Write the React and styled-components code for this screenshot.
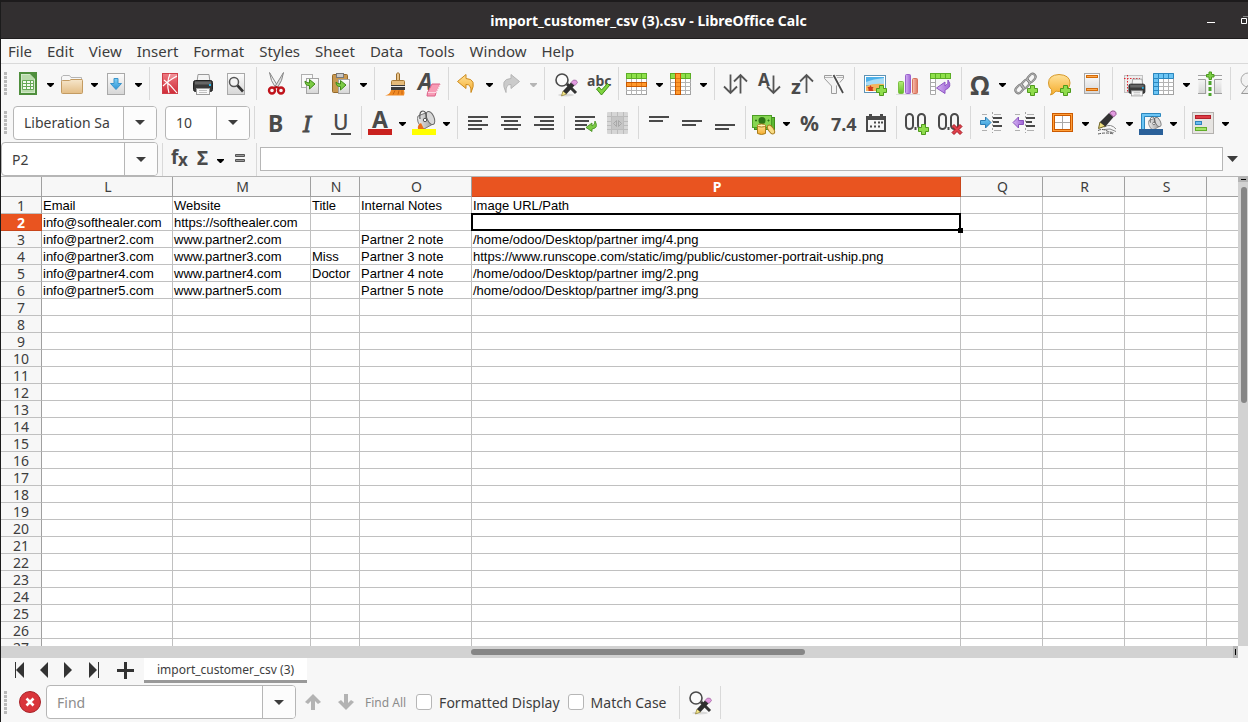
import React from 'react';
import styled, { createGlobalStyle, css } from 'styled-components';

const colors = {
    bar: '#f7f7f7',
    line: '#d9d9d9',
    border: '#b6b6b6',
    grid: '#c0c0c0',
    text: '#3d3d3d',
    ink: '#4a4a4a',
    orange: '#e95420',
    track: '#d2d2d2',
    thumb: '#868686'
};

/* ---------- icons ---------- */

const Icon = ({ children }) => (
    <svg width='24' height='24' viewBox='0 0 24 24' overflow='visible' aria-hidden='true'>{children}</svg>
);

const Gradients = () => (
    <GradientDefs width='0' height='0' aria-hidden='true'>
        <defs>
            <linearGradient id='paper' x1='0' y1='0' x2='0' y2='1'><stop offset='0' stopColor='#fdfdfd' /><stop offset='1' stopColor='#d6d6d6' /></linearGradient>
            <linearGradient id='steel' x1='0' y1='0' x2='1' y2='0'><stop offset='0' stopColor='#ededed' /><stop offset='1' stopColor='#9a9a9a' /></linearGradient>
            <linearGradient id='sand' x1='0' y1='0' x2='0' y2='1'><stop offset='0' stopColor='#f6e6cb' /><stop offset='1' stopColor='#e3bd85' /></linearGradient>
            <linearGradient id='red' x1='0' y1='0' x2='0' y2='1'><stop offset='0' stopColor='#ee7a82' /><stop offset='1' stopColor='#cf2c38' /></linearGradient>
            <linearGradient id='gold' x1='0' y1='0' x2='0' y2='1'><stop offset='0' stopColor='#ffe29a' /><stop offset='1' stopColor='#f5ab2a' /></linearGradient>
            <linearGradient id='green' x1='0' y1='0' x2='0' y2='1'><stop offset='0' stopColor='#b5ee78' /><stop offset='1' stopColor='#63bb28' /></linearGradient>
            <linearGradient id='violet' x1='0' y1='0' x2='1' y2='0'><stop offset='0' stopColor='#d3b2f2' /><stop offset='1' stopColor='#a064d6' /></linearGradient>
            <linearGradient id='blue' x1='0' y1='0' x2='0' y2='1'><stop offset='0' stopColor='#7fd0f5' /><stop offset='1' stopColor='#2e94d6' /></linearGradient>
            <linearGradient id='salmon' x1='0' y1='0' x2='1' y2='0'><stop offset='0' stopColor='#f9c4b4' /><stop offset='1' stopColor='#dd7660' /></linearGradient>
        </defs>
    </GradientDefs>
);

const Sheet = () => <rect x='3.5' y='1.5' width='17' height='21' fill='url(#paper)' stroke='#a9a9a9' />;
const Plus = ({ x, y }) => (
    <path transform={`translate(${x} ${y})`} d='M3.5.5h4v3h3v4h-3v3h-4v-3h-3v-4h3z' fill='#8fdc4c' stroke='#4f9a1c' />
);
const Lens = () => (
    <>
        <ellipse cx='13' cy='23' rx='8' ry='1.5' fill='#000' opacity='.12' />
        <path d='M14 12l9 9' stroke='#333' strokeWidth='3' />
        <circle cx='9' cy='8' r='6' fill='#fbfbfb' stroke='#4a4a4a' strokeWidth='1.6' />
        <path d='M8.5 24l1.500-5 3.500 3z' fill='#f6e98a' stroke='#8a7a30' strokeWidth='.7' />
        <path d='M10 19l8-8.500 3.500 3-8 8.500z' fill='#2e2e2e' />
        <path d='M18 10.500l2.500-2.500q3.500-.500 4 2.500L22 13.500z' fill='#e29be0' stroke='#9a5a98' strokeWidth='.7' />
    </>
);
const PrinterShape = () => (
    <>
        <path d='M7 10l1-7.500h11l1 7.500z' fill='#f4f4f4' stroke='#9a9a9a' />
        <rect x='3.5' y='8.5' width='19' height='11' rx='2' fill='#3a3a3a' stroke='#222' />
        <rect x='5' y='9.5' width='16' height='3' fill='#666' />
        <rect x='19' y='12' width='2' height='2' fill='#22b8f0' />
        <rect x='6.5' y='16.5' width='13' height='6' fill='#fafafa' stroke='#9a9a9a' />
        <path d='M9 18.500h8M9 20.500h8' stroke='#c2c2c2' />
    </>
);
const TableShape = ({ side }) => (
    <>
        <rect x='1.5' y='1.5' width='20' height='21' fill='#fff' stroke='#a2a2a2' />
        <path d='M1 6.500h21M1 10.500h21M1 14.500h21M1 18.500h21M6.500 1v22M11.500 1v22M16.500 1v22' stroke='#b4b4b4' />
        <rect x='1.5' y='1.5' width='20' height='5' fill='#8ee04a' stroke='#5cae26' />
        <path d='M6.500 2v4M11.500 2v4M16.500 2v4' stroke='#5cae26' />
        {side === 'row' && <><rect x='1.5' y='10.5' width='20' height='4' fill='#ff9a2e' stroke='#cc5a00' /><path d='M6.500 11v3M11.500 11v3M16.500 11v3' stroke='#e37817' /></>}
        {side === 'col' && <><rect x='6.5' y='1.5' width='5' height='21' fill='#ff9a2e' stroke='#cc5a00' /><path d='M7 6.500h4M7 10.500h4M7 14.500h4M7 18.500h4' stroke='#e37817' /></>}
    </>
);
const Bucket = () => (
    <>
        <path d='M4 5l10-4 5 12-9 5q-4-1-6-7-1-4 0-6z' fill='url(#steel)' stroke='#777' />
        <ellipse cx='16.5' cy='7' rx='3.5' ry='7' transform='rotate(-24 16.5 7)' fill='#d8d8d8' stroke='#6a6a6a' />
        <path d='M6 8q-1-8 3-8t3 9' fill='none' stroke='#555' strokeWidth='1.2' />
        <circle cx='11' cy='9' r='1.7' fill='#fff' stroke='#555' />
    </>
);
const Glyph = ({ x, y, size, children, ...rest }) => (
    <text x={x} y={y} fontSize={size} fontFamily='"Noto Sans", sans-serif' fontWeight='700' fill={colors.ink} {...rest}>{children}</text>
);
const Strokes = ({ rows }) => rows.map(([x, y, w]) => <rect key={`${x}-${y}`} x={x} y={y} width={w} height='2' fill={colors.ink} />);
const Decimals = () => (
    <g fill='none' stroke={colors.ink} strokeWidth='2'>
        <rect x='2' y='3' width='7' height='15' rx='3.5' />
        <rect x='14' y='3' width='7' height='15' rx='3.5' />
        <path d='M10.500 17.500h2' strokeWidth='3' />
    </g>
);
const DashedLines = () => (
    <>
        <path d='M4 3.500h5M4 19.500h5M16 3.500h7M16 19.500h7' stroke='#b0b0b0' />
        <path d='M14.500 1v21' stroke='#a5a5a5' strokeDasharray='2 2' />
    </>
);

const icons = {
    newSheet: (
        <>
            <rect x='4' y='1' width='16' height='21' fill='#e9f4e4' stroke='#4f8f3d' strokeWidth='2' />
            <path d='M5.500 2.500h9l4 4v14h-13z' fill='#b9dbab' />
            <path d='M14 2h5v5z' fill='#4f8f3d' />
            <path d='M6.500 8.500h11v9h-11zM6.500 11.500h11M6.500 14.500h11M10.500 8.500v9M14.500 8.500v9' fill='#f4faf1' stroke='#67a957' />
        </>
    ),
    folder: (
        <>
            <path d='M1.500 19V5l1.500-1.500h6.500L11 5.500h10.500V19z' fill='#f7f7f7' stroke='#b5b5b5' />
            <path d='M1.500 9.500q0-1 1-1h7l1.500-1h11q.500 0 .500 1v12q0 1-1 1h-19q-1 0-1-1z' fill='url(#sand)' stroke='#c39b62' />
        </>
    ),
    save: <><Sheet /><path d='M10 6.500h4v5h3.500L12 17.500 6.500 11.500H10z' fill='url(#blue)' stroke='#3b94cb' /></>,
    pdf: (
        <>
            <rect x='5.5' y='1.5' width='15' height='20' fill='url(#red)' stroke='#cf3f49' />
            <path d='M12 2h8v4q-6 1-7 2z' fill='#fff' opacity='.2' />
            <path d='M6 14q5-5 14-10M7 8q7 5 13 13M13 2q-4 9-1 19' fill='none' stroke='#fff' strokeWidth='1.2' />
        </>
    ),
    print: <PrinterShape />,
    preview: (
        <g transform='translate(1 0)'>
            <Sheet />
            <circle cx='10' cy='10' r='4.5' fill='#f4f4f4' stroke='#555' strokeWidth='1.5' />
            <path d='M13.500 13.500l5.500 6' stroke='#333' strokeWidth='2.6' />
        </g>
    ),
    cut: (
        <>
            <path d='M5.500.500l8.500 14-2.500 1Q6.500 9 5.500.500z' fill='#efefef' stroke='#888' />
            <path d='M19.500.500L11 14.500l2.500 1Q18.500 9 19.500.500z' fill='#dcdcdc' stroke='#888' />
            <ellipse cx='8' cy='18.5' rx='3' ry='3' fill='none' stroke='#c0141c' strokeWidth='2.4' />
            <ellipse cx='17' cy='18.5' rx='3' ry='3' fill='none' stroke='#c0141c' strokeWidth='2.4' />
            <path d='M10 16l2.500-1 2.500 1' fill='none' stroke='#b80d14' strokeWidth='2' />
        </>
    ),
    copy: (
        <>
            <rect x='4.5' y='2.5' width='11' height='13' fill='#fafafa' stroke='#b0b0b0' />
            <rect x='9.5' y='6.5' width='12' height='15' fill='url(#paper)' stroke='#a3a3a3' />
            <path d='M8 9q0 5 4.500 4.500V17l5.500-5-5.500-4.500V11Q9.500 11 8 9z' fill='#7ccb45' stroke='#3f8a18' />
        </>
    ),
    paste: (
        <>
            <rect x='3.5' y='2.5' width='15' height='18' rx='1' fill='#c99850' stroke='#94692b' />
            <rect x='7.5' y='1.5' width='7' height='4' fill='#c9c9c9' stroke='#777' />
            <rect x='9.5' y='7.5' width='11' height='14' fill='url(#paper)' stroke='#a3a3a3' />
            <path d='M7 10q0 5 4.500 4.500V18l5.500-5-5.500-4.500V12Q8.500 12 7 10z' fill='#7ccb45' stroke='#3f8a18' />
        </>
    ),
    brush: (
        <>
            <path d='M14.500 10V2q1.500-3 3 0v8' fill='#e9c48b' stroke='#9b6d2c' />
            <rect x='9.5' y='8.5' width='13' height='5' rx='1' fill='#e5bb7a' stroke='#a77936' />
            <rect x='9' y='13' width='14' height='5' fill='#3c3c3c' />
            <path d='M9 14.500h14' stroke='#eee' />
            <path d='M9 18h13q1 3 0 5.500H3q5-1 6-5.500z' fill='#f08a24' />
            <path d='M13 18.500l-2 4M17 18.500l-1 4M20 18.500v4' stroke='#c76410' />
        </>
    ),
    clear: (
        <>
            <Glyph x='3' y='18' size='23' fontStyle='italic'>A</Glyph>
            <path d='M12.500 20.500l4.500-8.500h8l-4 8.500-1 3.500h-8z' fill='#f79bb5' stroke='#dc5f86' />
            <path d='M13 20.500h8l4-8' fill='none' stroke='#fcd5e0' />
        </>
    ),
    undo: <path d='M11 2.500L2.500 9.500l8.500 7v-4q5.500-.500 5 8 6.500-13.500-5-14z' fill='url(#gold)' stroke='#cd8b1e' strokeLinejoin='round' />,
    redo: <path d='M12 2.500l8.500 7-8.500 7v-4q-5.500-.500-5 8-6.500-13.500 5-14z' fill='#cbcbcb' stroke='#b5b5b5' strokeLinejoin='round' />,
    find: <g transform='translate(1 0)'><Lens /></g>,
    spell: (
        <>
            <Glyph x='2' y='14' size='14'>abc</Glyph>
            <path d='M11.500 17l2.500-2 2.500 3 6-6.500 2 2L16.500 23z' fill='#7fd33f' stroke='#3f8f15' />
        </>
    ),
    row: <TableShape side='row' />,
    col: <TableShape side='col' />,
    sort: <path d='M8.500 2.500v18M2 14.500l6.500 6.500 6.500-6.500M18.500 21.500V3.500M12 9.500L18.500 3l6.500 6.500' fill='none' stroke='#555' strokeWidth='1.8' />,
    sortAsc: <><Glyph x='3' y='14' size='17'>A</Glyph><path d='M18.500 3.500v17M12 14.500l6.500 6.500 6.500-6.500' fill='none' stroke='#555' strokeWidth='1.8' /></>,
    sortDesc: <><Glyph x='3' y='22' size='20'>z</Glyph><path d='M18.500 21v-17M12 9.500L18.500 3l6.500 6.500' fill='none' stroke='#555' strokeWidth='1.8' /></>,
    filter: (
        <>
            <path d='M3.500 3.500h19v3l-7 7.500v7.500h-5V14l-7-7.500z' fill='#f3f3f3' stroke='#9c9c9c' />
            <path d='M4 5.500h18' stroke='#b8b8b8' />
            <path d='M12 2l10 18.500' stroke='#fff' strokeWidth='3.5' />
            <path d='M12.500 3l9.500 18' stroke='#4a4a4a' strokeWidth='1.8' />
        </>
    ),
    image: (
        <>
            <rect x='2.5' y='3.5' width='21' height='17' fill='#fff' stroke='#5e93b5' />
            <rect x='4' y='5' width='18' height='14' fill='#4db1ea' />
            <path d='M4 10q7-3 18-4v7H4z' fill='#a8dcf6' />
            <path d='M4 14q8-3 18-2v7H4z' fill='#f4b55d' />
            <path d='M8.500 13l1 2h2l-1 2 1 2h-5l0-2-1-2h2z' fill='#cf3b1d' />
            <Plus x='14' y='13' />
        </>
    ),
    chart: (
        <>
            <path d='M1 22.500h24' stroke='#ddd' />
            <rect x='3.5' y='9.5' width='5' height='12' rx='1' fill='url(#green)' stroke='#7cc043' />
            <rect x='10.5' y='2.5' width='5' height='19' rx='1' fill='url(#violet)' stroke='#9a62cd' />
            <rect x='17.5' y='6.5' width='5' height='15' rx='1' fill='url(#salmon)' stroke='#d5735d' />
        </>
    ),
    pivot: (
        <>
            <path d='M2.500 1.500v21h5v-21M2 10.500h6M2 14.500h6M2 18.500h6' fill='#fff' stroke='#a9a9a9' />
            <rect x='2.5' y='1.5' width='20' height='5' fill='#8ee04a' stroke='#5cae26' />
            <path d='M7.500 2v4M12.500 2v4M17.500 2v4' stroke='#5cae26' />
            <path d='M20 8q5 7-3 10v3.500L8.500 16l8.500-6v4q4-2 3-6z' fill='url(#violet)' stroke='#8e55c4' />
        </>
    ),
    omega: <Glyph x='2' y='23' size='26'>Ω</Glyph>,
    link: (
        <>
            <g fill='none' stroke='#777' strokeWidth='2.2'>
                <rect x='2' y='14' width='9' height='6' rx='3' transform='rotate(-48 6.5 17)' />
                <rect x='8' y='9' width='9' height='6' rx='3' transform='rotate(-48 12.5 12)' />
                <rect x='14' y='3' width='9' height='6' rx='3' transform='rotate(-48 18.5 6)' />
            </g>
            <g fill='none' stroke='#c4c4c4' strokeWidth='.8'>
                <rect x='2' y='14' width='9' height='6' rx='3' transform='rotate(-48 6.5 17)' />
                <rect x='8' y='9' width='9' height='6' rx='3' transform='rotate(-48 12.5 12)' />
                <rect x='14' y='3' width='9' height='6' rx='3' transform='rotate(-48 18.5 6)' />
            </g>
            <Plus x='14' y='13' />
        </>
    ),
    comment: (
        <>
            <path d='M13 2.500q11 .500 11 8.500t-11 8.500q-2 0-3-.500-2 3-5.500 4 2-3 1-5.500-3-2-3-6.500 0-8 10.500-8.500z' fill='url(#gold)' stroke='#d79a2b' />
            <Plus x='14' y='13' />
        </>
    ),
    headers: (
        <>
            <rect x='5.5' y='1.5' width='15' height='20' fill='url(#paper)' stroke='#a9a9a9' />
            <rect x='7.5' y='3.5' width='11' height='2' fill='#ffa94d' stroke='#d36b09' />
            <rect x='7.5' y='16.5' width='11' height='2' fill='#ffa94d' stroke='#d36b09' />
        </>
    ),
    printArea: (
        <>
            <rect x='4.5' y='3.5' width='18' height='17' fill='#ededed' stroke='#c2c2c2' />
            <path d='M4 6.500h16M7.500 3v18' fill='none' stroke='#e2242d' strokeDasharray='1.5 1.5' />
            <g transform='translate(6 5) scale(.84)'><PrinterShape /></g>
        </>
    ),
    freeze: (
        <>
            <rect x='1.5' y='1.5' width='20' height='21' fill='#fff' stroke='#a2a2a2' />
            <path d='M6.500 6.500h15M6.500 10.500h15M6.500 14.500h15M6.500 18.500h15M11.500 6v16M16.500 6v16' stroke='#b4b4b4' />
            <path d='M1.500 1.500h20v5h-15v16h-5z' fill='#6cc5f4' stroke='#2b87bf' />
            <path d='M6.500 2v4M11.500 2v4M16.500 2v4M2 6.500h4M2 10.500h4M2 14.500h4M2 18.500h4' stroke='#2b87bf' />
        </>
    ),
    splitWindow: (
        <>
            <rect x='1.5' y='3.5' width='8' height='18' fill='url(#paper)' />
            <rect x='17.5' y='3.5' width='7' height='18' fill='url(#paper)' />
            <path d='M1 3.500h8M17 3.500h8M1 7.500h7.500V22M25 7.500h-7.500V22M1 21.500h8M17 21.500h8' fill='none' stroke='#a0a0a0' />
            <path d='M13 9v15' stroke='#4ba32b' strokeWidth='3' strokeDasharray='4 2' />
            <path d='M12 0h2.500v2.500H17V5h-2.500v2.500H12V5H9.500V2.500H12z' fill='#7ccf46' stroke='#4c9a20' />
        </>
    ),
    shapes: (
        <>
            <circle cx='10' cy='8' r='7' fill='#f2f2f2' stroke='#aaa' />
            <path d='M3.500 21.500l8-10 8 10z' fill='#e8e8e8' stroke='#999' />
        </>
    ),
    bold: <Glyph x='6' y='21' size='23'>B</Glyph>,
    italic: <Glyph x='8' y='21' size='22' fontFamily='"DejaVu Serif", serif' fontStyle='italic' fontWeight='400' stroke={colors.ink} strokeWidth='.8'>I</Glyph>,
    underline: <><Glyph x='5' y='19' size='21' fontWeight='500'>U</Glyph><rect x='3' y='22' width='20' height='2' fill={colors.ink} /></>,
    fontColor: <><Glyph x='4' y='17' size='23'>A</Glyph><rect x='0' y='18' width='24' height='6' fill='#c9211e' /></>,
    highlight: (
        <>
            <g transform='translate(2 0)'><Bucket /></g>
            <path d='M6 18q-1-4 3-6l3 6z' fill='#e9711c' />
            <rect x='0' y='18' width='24' height='6' fill='#ff0' />
        </>
    ),
    left: <Strokes rows={[[3, 5, 20], [3, 9, 14], [3, 13, 20], [3, 17, 14]]} />,
    center: <Strokes rows={[[3, 5, 20], [6, 9, 14], [3, 13, 20], [6, 17, 14]]} />,
    right: <Strokes rows={[[3, 5, 20], [9, 9, 14], [3, 13, 20], [9, 17, 14]]} />,
    wrap: (
        <>
            <Strokes rows={[[3, 5, 20], [3, 9, 14], [3, 13, 12], [3, 17, 10]]} />
            <path d='M23 10q4 7-3 8v2.500l-6-4 6-4.500V15q3-1 3-5z' fill='#7ccb45' stroke='#3f8a18' strokeWidth='.8' />
        </>
    ),
    merge: (
        <>
            <rect x='2' y='1' width='21' height='22' rx='1' fill='#d6d6d6' />
            <path d='M2 5.500h21M2 18.500h21M6.500 1v22M12.500 1v5M12.500 18v5M18.500 1v22M2 10.500h5M2 14.500h5M18 10.500h5M18 14.500h5' stroke='#bcbcbc' />
            <rect x='7' y='6' width='11' height='12' fill='#c6c6c6' />
            <path d='M11.500 9.500v6l-3-3zM13.500 9.500v6l3-3z' fill='none' stroke='#a8a8a8' />
        </>
    ),
    top: <Strokes rows={[[3, 5, 20], [3, 9, 14]]} />,
    middle: <Strokes rows={[[3, 9, 20], [3, 13, 14]]} />,
    bottom: <Strokes rows={[[3, 13, 20], [3, 17, 14]]} />,
    currency: (
        <>
            <rect x='2.5' y='6.5' width='20' height='12' fill='#5fb832' stroke='#3f8e1b' />
            <rect x='.5' y='4.5' width='19' height='12' fill='#86d552' stroke='#4c9e25' />
            <circle cx='10' cy='9.5' r='3.5' fill='#2f7417' />
            <path d='M3.500 9h1v1h-1zM16 9h1v1h-1z' fill='#2f7417' stroke='#2f7417' />
            <path d='M5.500 14.500v8q4 2 8 0v-8z' fill='url(#gold)' stroke='#a87d1d' />
            <ellipse cx='9.5' cy='14.5' rx='4' ry='1.5' fill='#fff0b8' stroke='#a87d1d' />
            <ellipse cx='19' cy='18.5' rx='2.5' ry='5' transform='rotate(-35 19 18.5)' fill='#f8dc85' stroke='#a87d1d' />
        </>
    ),
    percent: <Glyph x='3' y='20' size='21'>%</Glyph>,
    number: <Glyph x='1' y='20' size='18'>7.4</Glyph>,
    date: (
        <>
            <path d='M3 5h3V3h3v2h8V3h3v2h3v16H3z' fill={colors.ink} />
            <rect x='5' y='9' width='16' height='10' fill='#f7f7f7' />
            <path d='M11 11.500h2M15 11.500h2M18 11.500h2M7 15.500h2M11 15.500h2M15 15.500h2' stroke={colors.ink} strokeWidth='2' />
        </>
    ),
    addDecimal: <><Decimals /><Plus x='14' y='13' /></>,
    dropDecimal: (
        <>
            <Decimals />
            <path d='M15 15.500l2-2 3 3 3-3 2 2-3 3 3 3-2 2-3-3-3 3-2-2 3-3z' fill='#e0404a' stroke='#a5151f' />
        </>
    ),
    indent: (
        <>
            <DashedLines />
            <Strokes rows={[[15, 6, 9], [15, 10, 6], [15, 14, 9]]} />
            <path d='M2.500 9.500h5v-3.500l5.500 5.500-5.500 5.500v-3.500h-5z' fill='url(#blue)' stroke='#2d7db3' />
        </>
    ),
    outdent: (
        <>
            <DashedLines />
            <Strokes rows={[[15, 6, 9], [15, 10, 6], [15, 14, 9]]} />
            <path d='M12.500 9.500h-5v-3.500L2 11.500 7.500 17v-3.500h5z' fill='url(#violet)' stroke='#8a55bd' />
        </>
    ),
    borders: (
        <>
            <rect x='2.5' y='3.5' width='18' height='16' fill='#fff' stroke='#cc5a00' strokeWidth='3' />
            <rect x='2.5' y='3.5' width='18' height='16' fill='none' stroke='#ff9f3a' />
            <path d='M11.500 5v13M4 11.500h15' stroke='#a8a8a8' />
        </>
    ),
    lineStyle: (
        <>
            <path d='M9 16q7-4 12 2M9 18.500q6-2 12 2' fill='none' stroke='#888' />
            <path d='M3 19.500q4-2 8 0t8 2M3 23q4-1 8-1t8 1' fill='none' stroke='#555' strokeDasharray='3 1' />
            <path d='M3.500 17.500L5 11l5.500 4z' fill='#efe083' stroke='#6e6326' />
            <path d='M5 11L14 2l4.500 4-8 9.500z' fill='#333' />
            <path d='M14.500 2L17 0q4.500-.500 4 3.500L18.500 6z' fill='#e29be0' stroke='#8f4f8c' />
        </>
    ),
    borderColor: (
        <>
            <path d='M2.500 20V2.500h19v3h-16V20z' fill='#6cc5f4' stroke='#2b87bf' />
            <g transform='translate(7 6) scale(.72)'><Bucket /></g>
            <rect x='0' y='18' width='24' height='6' fill='#2a6099' />
        </>
    ),
    conditional: (
        <>
            <rect x='1.5' y='1.5' width='21' height='21' fill='#e6e4e1' stroke='#b3b1ae' />
            <rect x='4.5' y='4.5' width='15' height='3' fill='#dd3a44' stroke='#b3202a' />
            <rect x='4.5' y='10.5' width='6' height='3' fill='#6cbcf0' stroke='#2f84bc' />
            <rect x='4.5' y='16.5' width='11' height='3' fill='#a4e368' stroke='#62ad2a' />
        </>
    )
};

const Caret = () => (
    <svg width='7' height='4' viewBox='0 0 7 4' aria-hidden='true'><path d='M0 0h7v1L4 4H3L0 1z' fill='currentColor' /></svg>
);

/* ---------- toolbar contents, '|' is a separator, a trailing + adds a menu arrow ---------- */

const standardTools = 'newSheet+ folder+ save+ | pdf print preview | cut copy paste+ | brush clear | undo+ redo+ | find spell | row+ col+ | sort sortAsc sortDesc filter | image chart pivot | omega+ link comment headers | printArea freeze+ splitWindow | shapes'.split(' ');
const formatTools = '| bold italic underline | fontColor+ highlight+ | left center right | wrap merge | top middle bottom | currency+ percent number date | addDecimal dropDecimal | indent outdent | borders+ lineStyle+ borderColor+ | conditional+'.split(' ');

const menus = ['File', 'Edit', 'View', 'Insert', 'Format', 'Styles', 'Sheet', 'Data', 'Tools', 'Window', 'Help'];

const columns = [
    { name: 'L', width: 131 },
    { name: 'M', width: 138 },
    { name: 'N', width: 49 },
    { name: 'O', width: 112 },
    { name: 'P', width: 489 },
    { name: 'Q', width: 82 },
    { name: 'R', width: 82 },
    { name: 'S', width: 82 },
    { name: '', width: 82 }
];

const data = [
    ['Email', 'Website', 'Title', 'Internal Notes', 'Image URL/Path'],
    ['info@softhealer.com', 'https://softhealer.com'],
    ['info@partner2.com', 'www.partner2.com', '', 'Partner 2 note', '/home/odoo/Desktop/partner img/4.png'],
    ['info@partner3.com', 'www.partner3.com', 'Miss', 'Partner 3 note', 'https://www.runscope.com/static/img/public/customer-portrait-uship.png'],
    ['info@partner4.com', 'www.partner4.com', 'Doctor', 'Partner 4 note', '/home/odoo/Desktop/partner img/2.png'],
    ['info@partner5.com', 'www.partner5.com', '', 'Partner 5 note', '/home/odoo/Desktop/partner img/3.png']
];

const rows = Array.from({ length: 27 }, (_, i) => data[i] || []);
const active = { row: 1, col: 4 };

const Tools = ({ items }) => items.map((item, i) => {
    if (item === '|') return <Separator key={i} />;
    const name = item.replace('+', '');
    if (item === name) {
        return <ToolButton key={i} aria-label={name}><Icon>{icons[name]}</Icon></ToolButton>;
    }
    return (
        <SplitButton key={i} $off={name === 'redo'}>
            <button aria-label={name}><Icon>{icons[name]}</Icon></button>
            <button aria-label={`${name} menu`}><Caret /></button>
        </SplitButton>
    );
});

const Combo = ({ label, width, ...rest }) => (
    <ComboBox $width={width}>
        <input aria-label={label} {...rest} />
        <button type='button' aria-label={`${label} list`}><svg width='10' height='5' viewBox='0 0 10 5'><path d='M0 0h10L5 5z' fill='currentColor' /></svg></button>
    </ComboBox>
);

export default function App() {
    return (
        <Window>
            <GlobalStyle />
            <Gradients />

            <TitleBar>
                <h1>import_customer_csv (3).csv - LibreOffice Calc</h1>
                <div className='controls'>
                    <button aria-label='Minimize'><svg width='8' height='10' viewBox='0 0 8 10'><path d='M0 6.500h8' stroke='#fff' /></svg></button>
                    <button aria-label='Maximize'><svg width='7' height='10' viewBox='0 0 7 10'><path d='M2 .500h5' stroke='#888' /><path d='M.500 2.500h5v5h-5z' fill='none' stroke='#fff' /></svg></button>
                </div>
            </TitleBar>

            <MenuBar>
                {menus.map(menu => <button key={menu}>{menu}</button>)}
            </MenuBar>

            <Toolbar>
                <Grip />
                <Tools items={standardTools} />
            </Toolbar>

            <Toolbar>
                <Grip />
                <Combo label='Font Name' width={144} defaultValue='Liberation Sa' />
                <Gap />
                <Combo label='Font Size' width={85} defaultValue='10' />
                <Tools items={formatTools} />
            </Toolbar>

            <FormulaBar>
                <Combo label='Name Box' width={157} defaultValue='P2' />
                <Separator />
                <div className='functions'>
                    <button aria-label='Function Wizard'>
                        <Icon><Glyph x='5' y='17' size='19'>f</Glyph><Glyph x='12' y='19' size='17'>x</Glyph></Icon>
                    </button>
                    <button aria-label='Select Function'><Icon><Glyph x='7' y='18' size='19'>Σ</Glyph></Icon></button>
                    <button className='arrow' aria-label='Function list'><Caret /></button>
                    <button aria-label='Formula'>
                        <Icon><path d='M7.500 7.500h9v2h-9zM7.500 12.500h9v2h-9z' fill='#999' stroke='#555' /></Icon>
                    </button>
                </div>
                <Separator />
                <input className='formula' aria-label='Input line' />
                <button className='expand' aria-label='Expand Formula Bar'>
                    <svg width='11' height='6' viewBox='0 0 11 6'><path d='M0 0h11L5.500 6z' fill='currentColor' /></svg>
                </button>
            </FormulaBar>

            <SheetArea>
                <GridView>
                    <Grid>
                        <colgroup>
                            <Col $width={41} />
                            {columns.map((col, i) => <Col key={i} $width={col.width} />)}
                        </colgroup>
                        <thead>
                            <tr>
                                <HeadCell />
                                {columns.map((col, i) => <HeadCell key={i} scope='col' $active={i === active.col}>{col.name}</HeadCell>)}
                            </tr>
                        </thead>
                        <tbody>
                            {rows.map((row, r) => (
                                <tr key={r}>
                                    <RowHead scope='row' $active={r === active.row}>{r + 1}</RowHead>
                                    {columns.map((col, c) => (
                                        <Cell key={c}>
                                            {row[c]}
                                            {r === active.row && c === active.col ? <Cursor /> : null}
                                        </Cell>
                                    ))}
                                </tr>
                            ))}
                        </tbody>
                    </Grid>
                </GridView>
                <VerticalScroll><i /><span /></VerticalScroll>
                <HorizontalScroll><span /><i /></HorizontalScroll>
            </SheetArea>

            <TabBar>
                <button aria-label='First Sheet'><Icon><path d='M8.500 4v16' stroke='#333' /><path d='M17 4v16L9 12z' fill='#333' /></Icon></button>
                <button aria-label='Previous Sheet'><Icon><path d='M17 4v16L9 12z' fill='#333' /></Icon></button>
                <button aria-label='Next Sheet'><Icon><path d='M9 4v16l8-8z' fill='#333' /></Icon></button>
                <button aria-label='Last Sheet'><Icon><path d='M19.500 4v16' stroke='#333' /><path d='M10 4v16l8-8z' fill='#333' /></Icon></button>
                <button className='add' aria-label='Add Sheet'><Icon><path d='M12.500 4v17M4 12.500h17' stroke='#333' strokeWidth='3' /></Icon></button>
                <button className='tab'>import_customer_csv (3)</button>
            </TabBar>

            <FindBar>
                <Grip />
                <button type='button' className='close' aria-label='Close Find Bar'>
                    <Icon>
                        <circle cx='12' cy='12' r='10.5' fill='#d9353b' stroke='#a8242a' />
                        <path d='M8.500 8.500l7 7M15.500 8.500l-7 7' stroke='#fff' strokeWidth='2.6' />
                    </Icon>
                </button>
                <Combo label='Find Text' width={250} placeholder='Find' />
                <ToolButton type='button' aria-label='Find Previous'><Icon><path d='M13 4l8 8-3 2-3-3v9h-4v-9l-3 3-3-2z' fill='#b3b3b3' /></Icon></ToolButton>
                <ToolButton type='button' aria-label='Find Next'><Icon><path d='M13 20l-8-8 3-2 3 3V4h4v9l3-3 3 2z' fill='#b3b3b3' /></Icon></ToolButton>
                <button type='button' className='all'>Find All</button>
                <label><input type='checkbox' />Formatted Display</label>
                <label><input type='checkbox' />Match Case</label>
                <Separator />
                <ToolButton type='button' aria-label='Find and Replace'><Icon><Lens /></Icon></ToolButton>
                <Separator />
            </FindBar>
        </Window>
    );
}

const GlobalStyle = createGlobalStyle`
    * {
        box-sizing: border-box;
    }
    body {
        margin: 0;
        overflow: hidden;
        font-family: "Noto Sans", sans-serif;
        font-size: 14px;
        color: ${colors.text};
    }
    button, input {
        font: inherit;
        color: inherit;
    }
    button {
        padding: 0;
        border: none;
        background: none;
        flex: none;
    }
    svg {
        display: block;
        flex: none;
    }
`

const GradientDefs = styled.svg`
    position: absolute;
`

const Window = styled.div`
    display: flex;
    flex-direction: column;
    height: 100vh;
    overflow: hidden;
    border-left: 1px solid #1b1b1b;
    background: ${colors.bar};
`

const TitleBar = styled.header`
    display: grid;
    grid-template-columns: 1fr auto 1fr;
    align-items: center;
    flex: none;
    height: 39px;
    padding: 1px 0 0 48px;
    border-top: 2px solid #1d1b1c;
    border-bottom: 1px solid #1f1d1e;
    background: #322f30;
    color: white;

    h1 {
        grid-column: 2;
        margin: 0;
        font-size: 14px;
        line-height: 20px;
    }
    .controls {
        display: flex;
        justify-content: flex-end;
        gap: 26px;
    }
`

const MenuBar = styled.nav`
    display: flex;
    align-items: center;
    flex: none;
    gap: 15px;
    height: 25px;
    padding-left: 7px;
    border-bottom: 1px solid ${colors.line};
    font-size: 15px;
`

const Toolbar = styled.div`
    display: flex;
    align-items: center;
    flex: none;
    height: 39px;
    overflow: hidden;
`

const Grip = styled.span`
    flex: none;
    width: 3px;
    height: 23px;
    margin: 0 6px 0 3px;
    background: repeating-linear-gradient(#b9b9b9 0 3px, transparent 3px 4px);
`

const Gap = styled.span`
    flex: none;
    width: 8px;
`

const Separator = styled.span`
    flex: none;
    width: 8px;
    height: 33px;
    background: linear-gradient(${colors.line}, ${colors.line}) 4px 0 / 1px 100% no-repeat;
`

const ToolButton = styled.button`
    width: 33px;
    height: 33px;
    padding-left: 4px;
`

const SplitButton = styled.span`
    display: flex;
    align-items: center;
    flex: none;
    width: 44px;
    height: 33px;
    padding-left: 3px;
    gap: 7px;
    color: ${props => props.$off ? '#b5b5b5' : '#000'};

    button:last-child {
        padding-top: 3px;
    }
`

const ComboBox = styled.div`
    display: flex;
    flex: none;
    width: ${props => props.$width}px;
    height: 34px;
    border: 1px solid ${colors.border};
    border-radius: 4px;
    background: white;
    overflow: hidden;

    input {
        flex: 1;
        min-width: 0;
        padding: 0 0 0 10px;
        border: none;
        outline: none;
        background: none;
    }
    input::placeholder {
        color: #8c8c8c;
    }
    button {
        display: flex;
        align-items: center;
        justify-content: center;
        width: 33px;
        border-left: 1px solid ${colors.border};
        background: #fcfcfc;
    }
`

const FormulaBar = styled.div`
    display: flex;
    align-items: center;
    flex: none;
    height: 35px;
    border-bottom: 1px solid ${colors.border};

    .functions {
        display: flex;
        align-items: center;
        width: 86px;
    }
    .arrow {
        width: 14px;
        padding: 3px 0 0 3px;
        color: black;
    }
    .formula {
        flex: 1;
        min-width: 0;
        height: 24px;
        padding: 0 4px;
        border: 1px solid ${colors.border};
        background: white;
        outline: none;
    }
    .expand {
        width: 25px;
        padding-left: 4px;
    }
`

const SheetArea = styled.main`
    display: grid;
    grid-template: minmax(0, 1fr) 12px / minmax(0, 1fr) 10px;
    flex: 1;
    min-height: 0;
`

const GridView = styled.div`
    overflow: hidden;
    background: white;
`

const Grid = styled.table`
    table-layout: fixed;
    width: 1288px;
    border-collapse: separate;
    border-spacing: 0;
`

const Col = styled.col`
    width: ${props => props.$width}px;
`

const activeHead = css`
    background: ${colors.orange};
    border-color: #c8461b;
    color: white;
    font-weight: 700;
`

const HeadCell = styled.th`
    height: 20px;
    padding: 0 0 0 2px;
    border-right: 1px solid #a0a0a0;
    border-bottom: 1px solid #a0a0a0;
    background: ${colors.bar};
    font-size: 14px;
    font-weight: 400;
    line-height: 19px;
    ${props => props.$active && activeHead}
`

const RowHead = styled.th`
    height: 17px;
    padding: 2px 0 0;
    border-right: 1px solid #a0a0a0;
    border-bottom: 1px solid ${colors.grid};
    background: ${colors.bar};
    font-size: 14px;
    font-weight: 400;
    line-height: 14px;
    ${props => props.$active && activeHead}
`

const Cell = styled.td`
    position: relative;
    height: 17px;
    padding: 2px 0 0 1px;
    border-right: 1px solid ${colors.grid};
    border-bottom: 1px solid ${colors.grid};
    color: black;
    font-family: "Liberation Sans", sans-serif;
    font-size: 13px;
    line-height: 14px;
    white-space: nowrap;
`

const Cursor = styled.span`
    position: absolute;
    z-index: 1;
    inset: -1px;
    border: 2px solid black;

    &::after {
        content: '';
        position: absolute;
        right: -4px;
        bottom: -4px;
        width: 5px;
        height: 5px;
        background: black;
    }
`

const VerticalScroll = styled.div`
    display: flex;
    flex-direction: column;
    background: ${colors.track};

    i {
        height: 5px;
        border: solid #b4b4b4;
        border-width: 2px 2px 2px 3px;
        background: black;
    }
    span {
        height: 46%;
        margin: 5px 1px 0 3px;
        border-radius: 3px;
        background: ${colors.thumb};
    }
`

const HorizontalScroll = styled.div`
    display: flex;
    align-items: center;
    justify-content: space-between;
    background: ${colors.track};

    span {
        width: 27%;
        height: 6px;
        margin-left: 38%;
        border-radius: 3px;
        background: ${colors.thumb};
    }
    i {
        width: 5px;
        height: 12px;
        border: solid #b4b4b4;
        border-width: 3px 2px;
        background: black;
    }
`

const TabBar = styled.div`
    display: flex;
    align-items: flex-start;
    flex: none;
    height: 25px;
    padding-left: 6px;

    .add {
        margin: 0 7px 0 10px;
    }
    .tab {
        height: 25px;
        padding: 0 13px;
        border-bottom: 3px solid #999;
        background: white;
        font-size: 12px;
    }
`

const FindBar = styled.form`
    display: flex;
    align-items: center;
    flex: none;
    height: 39px;
    padding-bottom: 1px;

    .close {
        margin: 0 4px 0 5px;
    }
    .all {
        padding: 0 10px 0 3px;
        color: #8c8c8c;
        font-size: 12px;
    }
    label {
        display: flex;
        align-items: center;
        gap: 7px;
        margin-right: 8px;
    }
    label input {
        appearance: none;
        width: 16px;
        height: 16px;
        margin: 0;
        border: 1px solid ${colors.border};
        border-radius: 3px;
        background: white;
    }
`
